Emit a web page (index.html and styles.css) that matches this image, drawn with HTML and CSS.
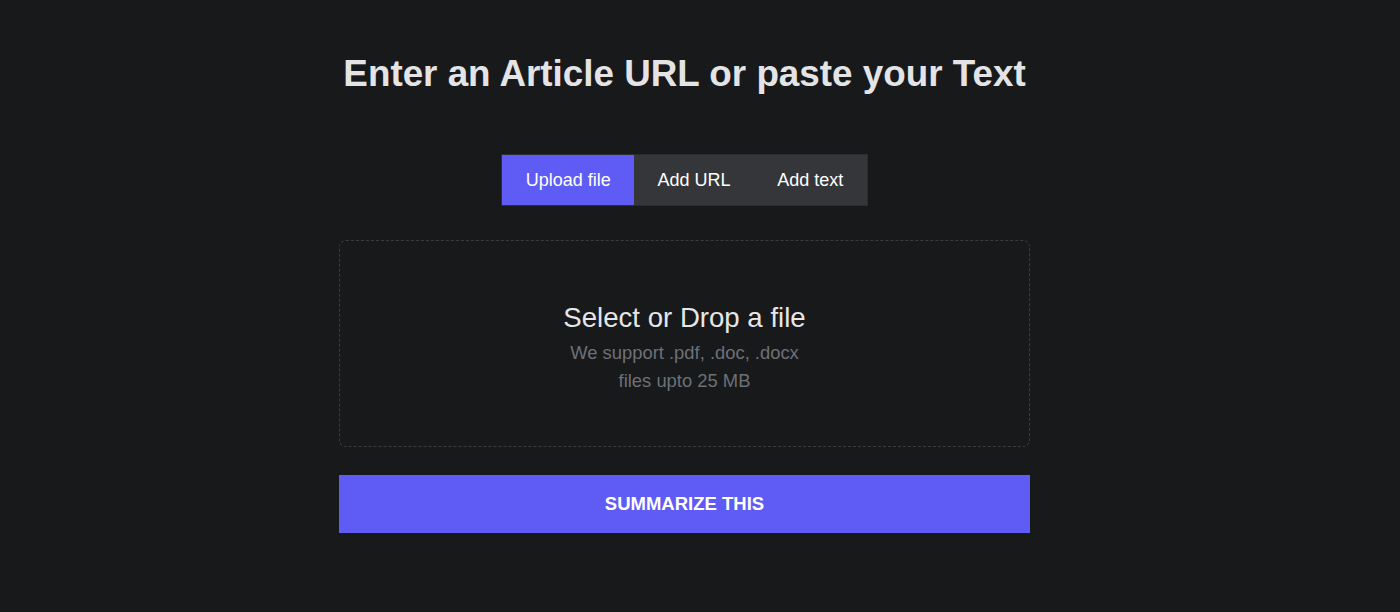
FILE: index.html
```html
<!DOCTYPE html>
<html lang="en">
<head>
<meta charset="utf-8">
<title>Summarize</title>
<link rel="stylesheet" href="styles.css">
</head>
<body>
<main class="page">
  <h1 class="title">Enter an Article URL or paste your Text</h1>
  <div class="tabs">
    <button class="tab tab-active">Upload file</button>
    <button class="tab">Add URL</button>
    <button class="tab">Add text</button>
  </div>
  <div class="dropzone">
    <div class="drop-title">Select or Drop a file</div>
    <div class="drop-sub">We support .pdf, .doc, .docx<br>files upto 25 MB</div>
  </div>
  <button class="submit">SUMMARIZE THIS</button>
</main>
</body>
</html>
```
FILE: styles.css
```css
html, body {
  margin: 0;
  padding: 0;
  background: #18191b;
  height: 100%;
}
body {
  font-family: "Liberation Sans", Arial, sans-serif;
  color: #e5e5e7;
}
.page {
  width: 691px;
  margin: 0 0 0 339px;
  padding-top: 52px;
  display: flex;
  flex-direction: column;
  align-items: center;
  box-sizing: border-box;
}
.title {
  margin: 0;
  font-size: 36.8px;
  line-height: 44px;
  font-weight: 700;
  color: #e4e4e6;
  white-space: nowrap;
}
.tabs {
  margin-top: 58px;
  display: flex;
  background: #35363a;
  border: 1px solid #2c2d31;
}
.tab {
  font-family: "Liberation Sans", Arial, sans-serif;
  font-size: 18px;
  color: #ffffff;
  background: transparent;
  border: none;
  height: 50px;
  padding: 0 23.4px;
  cursor: pointer;
}
.tab-active {
  background: #5f5cf5;
}
.dropzone {
  margin-top: 34px;
  width: 100%;
  height: 207px;
  box-sizing: border-box;
  border: 1px dashed #3b3c41;
  border-radius: 7px;
  display: flex;
  flex-direction: column;
  align-items: center;
  justify-content: center;
  padding-top: 8px;
}
.drop-title {
  font-size: 27.6px;
  line-height: 34px;
  color: #e6e6e8;
}
.drop-sub {
  margin-top: 4px;
  font-size: 18.4px;
  line-height: 28px;
  color: #6d7077;
  text-align: center;
}
.submit {
  margin-top: 28px;
  width: 100%;
  height: 58px;
  background: #5f5cf5;
  border: none;
  color: #ffffff;
  font-family: "Liberation Sans", Arial, sans-serif;
  font-size: 18.5px;
  font-weight: 700;
  cursor: pointer;
}
```
